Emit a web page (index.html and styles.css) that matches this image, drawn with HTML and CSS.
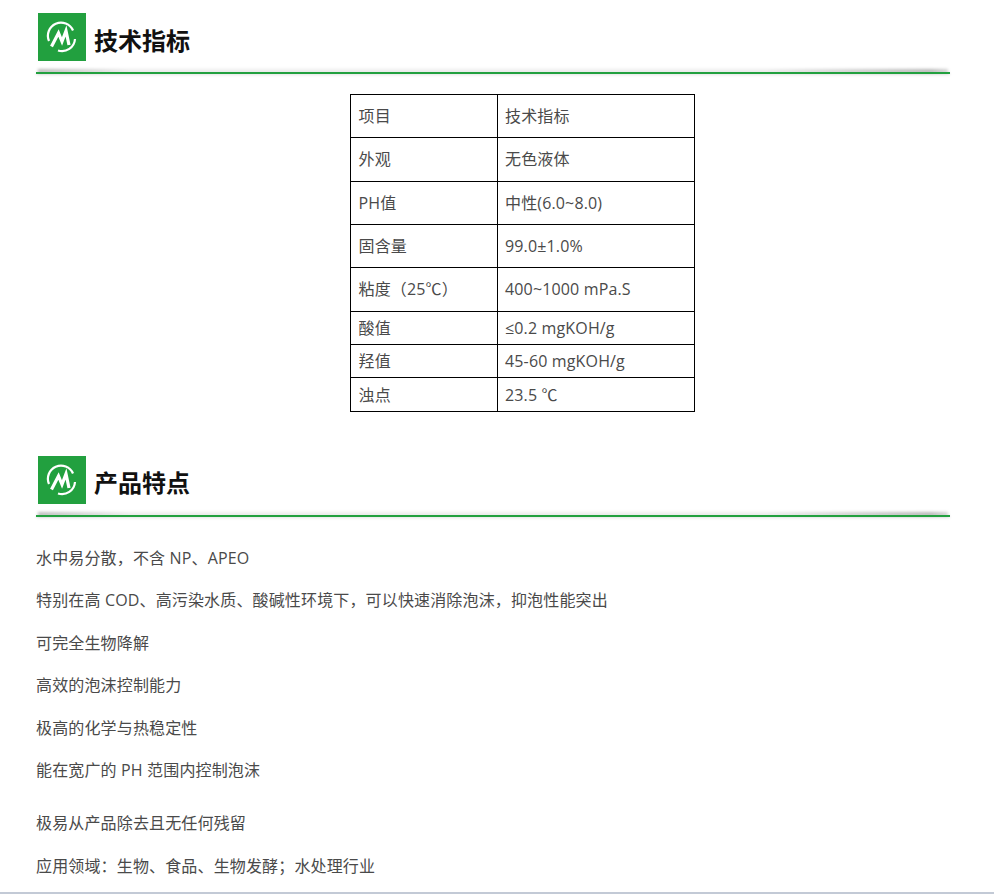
FILE: index.html
```html
<!DOCTYPE html>
<html lang="zh-CN">
<head>
<meta charset="utf-8">
<title>技术指标</title>
<link rel="stylesheet" href="styles.css">
</head>
<body>
<main class="page">
  <header class="heading">
    <div class="title-row">
      <svg class="logo" viewBox="0 0 48 48" aria-hidden="true">
        <rect width="48" height="48" fill="#22a03f"/>
        <path d="M11 28A13 13 0 0 1 35 17.500" class="arc"/>
        <path d="M20 37.500A13 13 0 0 0 37 26" class="arc"/>
        <path d="M13.500 33.500L20.500 20L24 28.500L28 18L31 32" class="mark"/>
      </svg>
      <h2 class="title">技术指标</h2>
    </div>
    <div class="rule"></div>
  </header>
  <table class="spec">
    <tbody>
      <tr class="tall"><td class="c1">项目</td><td>技术指标</td></tr>
      <tr class="tall"><td>外观</td><td>无色液体</td></tr>
      <tr class="tall"><td>PH值</td><td>中性(6.0~8.0)</td></tr>
      <tr class="tall"><td>固含量</td><td>99.0±1.0%</td></tr>
      <tr class="tall"><td>粘度（25℃）</td><td>400~1000 mPa.S</td></tr>
      <tr class="short"><td>酸值</td><td>≤0.2 mgKOH/g</td></tr>
      <tr class="short"><td>羟值</td><td>45-60 mgKOH/g</td></tr>
      <tr class="short"><td>浊点</td><td>23.5 ℃</td></tr>
    </tbody>
  </table>
  <header class="heading second">
    <div class="title-row">
      <svg class="logo" viewBox="0 0 48 48" aria-hidden="true">
        <rect width="48" height="48" fill="#22a03f"/>
        <path d="M11 28A13 13 0 0 1 35 17.500" class="arc"/>
        <path d="M20 37.500A13 13 0 0 0 37 26" class="arc"/>
        <path d="M13.500 33.500L20.500 20L24 28.500L28 18L31 32" class="mark"/>
      </svg>
      <h2 class="title">产品特点</h2>
    </div>
    <div class="rule"></div>
  </header>
  <section class="features">
    <p>水中易分散，不含 NP、APEO</p>
    <p>特别在高 COD、高污染水质、酸碱性环境下，可以快速消除泡沫，抑泡性能突出</p>
    <p>可完全生物降解</p>
    <p>高效的泡沫控制能力</p>
    <p>极高的化学与热稳定性</p>
    <p>能在宽广的 PH 范围内控制泡沫</p>
    <p class="gap">极易从产品除去且无任何残留</p>
    <p>应用领域：生物、食品、生物发酵；水处理行业</p>
  </section>
</main>
</body>
</html>
```
FILE: styles.css
```css
html {
  background: #fff;
}
body {
  margin: 0;
  padding: 0;
  font-family: "Open Sans", "Noto Sans CJK SC", sans-serif;
  font-weight: 400;
  color: #4a4a4a;
  font-size: 16px;
  letter-spacing: .15px;
  height: 894px;
  overflow: hidden;
  box-sizing: border-box;
  border-bottom: 2px solid #c3cad6;
}
.page {
  width: 914px;
  margin-left: 36px;
  padding-top: 13px;
}
.title-row {
  display: flex;
  align-items: center;
  padding-left: 2px;
  gap: 8px;
  height: 48px;
}
.logo {
  width: 48px;
  height: 48px;
  flex: none;
}
.arc {
  fill: none;
  stroke: #fff;
  stroke-width: 2.200;
}
.mark {
  fill: none;
  stroke: #fff;
  stroke-width: 3.200;
}
.title {
  margin: 0;
  padding-top: 7px;
  font-size: 24px;
  letter-spacing: 0;
  line-height: 48px;
  font-weight: 700;
  color: #111;
}
.rule {
  position: relative;
  height: 2px;
  margin-top: 11px;
  background: #22a03f;
  box-shadow: 0 1px 3px rgba(0, 0, 0, .12);
}
.rule::before {
  content: "";
  position: absolute;
  z-index: -1;
  left: 2px;
  right: 2px;
  top: -3px;
  height: 4px;
  background: linear-gradient(90deg, rgba(0, 0, 0, .26), rgba(0, 0, 0, .07) 10%, rgba(0, 0, 0, .07) 80%, rgba(0, 0, 0, .28) 98%, rgba(0, 0, 0, .16));
  filter: blur(1.500px);
}
.spec {
  border-collapse: collapse;
  margin: 20px 0 0 314px;
  width: 345px;
  table-layout: fixed;
}
.spec td {
  border: 1px solid #000;
  padding: 0 8px 0 7.500px;
  line-height: 22px;
}
.spec .tall td {
  height: 42.330px;
}
.spec .short td {
  height: 32.400px;
}
.spec .c1 {
  width: 130px;
}
.second {
  margin-top: 44px;
}
.features {
  padding-top: 30px;
}
.features p {
  margin: 0 0 20.500px;
  line-height: 22px;
}
.features .gap {
  margin-top: 31px;
}
```
